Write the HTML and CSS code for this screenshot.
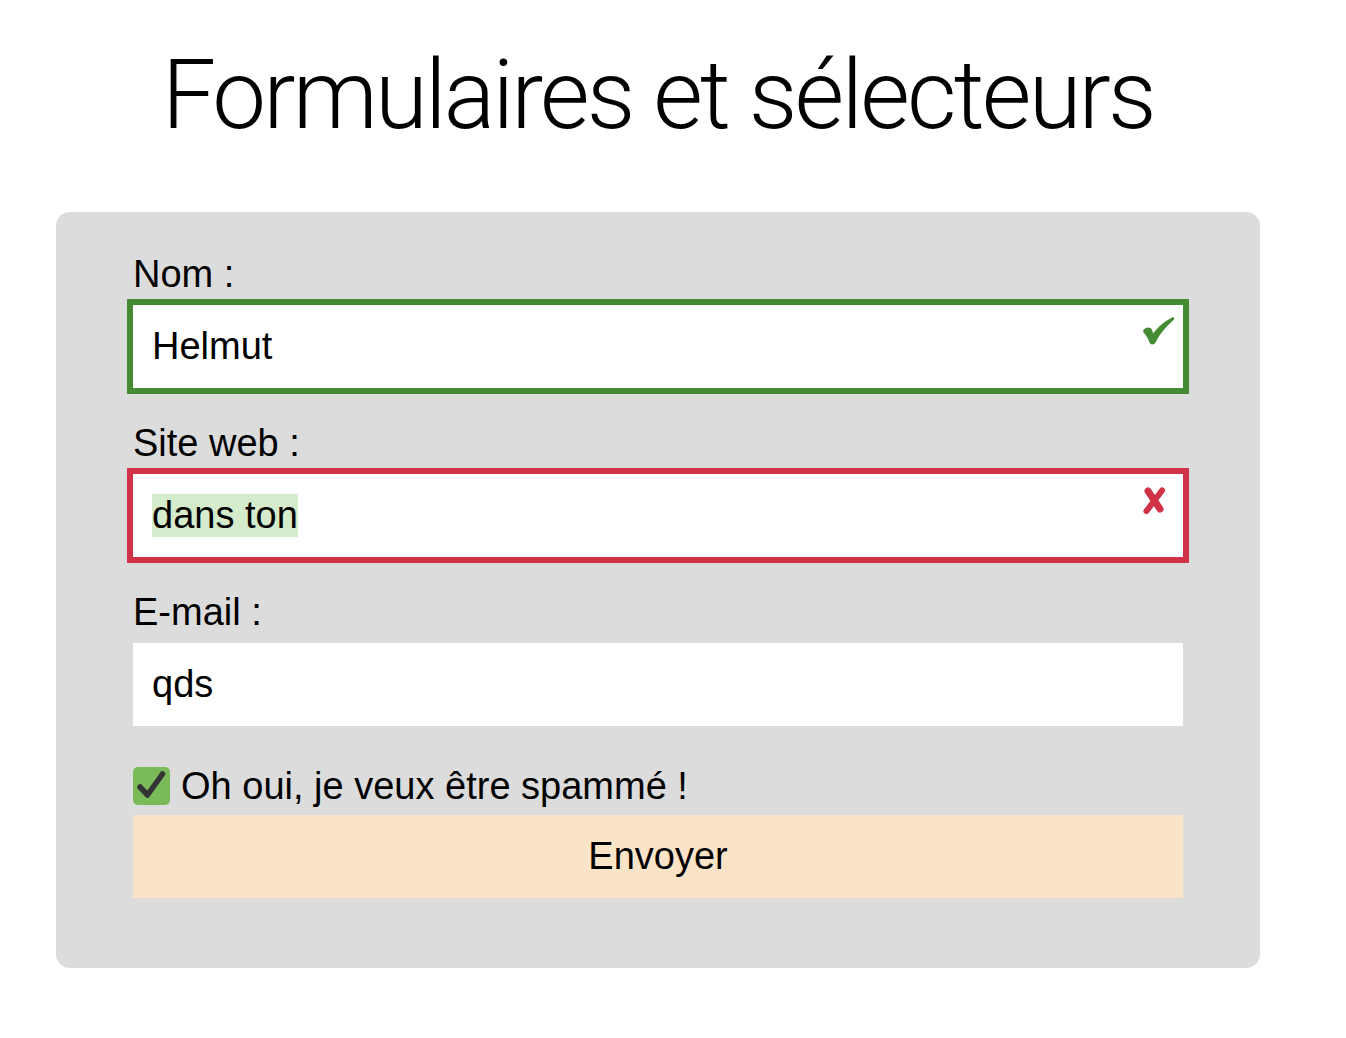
FILE: index.html
```html
<!DOCTYPE html>
<html lang="fr">
<head>
<meta charset="utf-8">
<title>Formulaires et sélecteurs</title>
<link rel="stylesheet" href="styles.css">
</head>
<body>
<div class="page">
  <h1 class="title">Formulaires et sélecteurs</h1>
  <form class="panel">
    <label class="label">Nom :</label>
    <div class="field valid">
      <span class="value">Helmut</span>
      <svg class="mark" width="36" height="30" viewBox="0 0 36 30">
        <path d="M2.5 13 C4.5 10 9.5 9.5 11 13 L12.3 16.5 C17 10 23 4.5 31.5 0.3 C33 -0.2 34 1.5 32.8 2.7 C25.5 9 19.5 16 14.5 25.5 C13 28 9.5 28 8.5 25.5 C7 21.5 5 18 2.8 15.8 C2 15 1.9 13.8 2.5 13 Z" fill="#458b33"/>
      </svg>
    </div>
    <label class="label">Site web :</label>
    <div class="field invalid">
      <span class="value hl">dans ton</span>
      <svg class="mark cross" width="30" height="30" viewBox="0 0 30 30">
        <path d="M7 4 L19 22" stroke="#d03247" stroke-width="7" stroke-linecap="round" fill="none"/>
        <path d="M21 3.5 L5.5 24" stroke="#d03247" stroke-width="6" stroke-linecap="round" fill="none"/>
      </svg>
    </div>
    <label class="label">E-mail :</label>
    <div class="field">
      <span class="value">qds</span>
    </div>
    <div class="check-row">
      <span class="box">
        <svg width="37" height="38" viewBox="0 0 37 38">
          <path d="M7 20 L14.5 28 L29.5 7" stroke="#333333" stroke-width="5.5" stroke-linecap="round" stroke-linejoin="round" fill="none"/>
        </svg>
      </span>
      <span class="check-text">Oh oui, je veux être spammé !</span>
    </div>
    <div class="button">Envoyer</div>
  </form>
</div>
</body>
</html>
```

FILE: styles.css
```css
html, body {
  margin: 0;
  padding: 0;
  background: #ffffff;
}

.page {
  width: 1204px;
  margin-left: 56px;
  padding-top: 39px;
}

.title {
  margin: 0 0 61px 0;
  font-family: Roboto, "Liberation Sans", sans-serif;
  font-weight: 300;
  font-size: 96px;
  line-height: 112px;
  letter-spacing: -2.8px;
  text-align: center;
  color: #000;
}

.panel {
  background: #dcdcdc;
  border-radius: 14px;
  padding: 40px 77px 70px 77px;
  font-family: "Liberation Sans", Arial, sans-serif;
  font-size: 38px;
  color: #000;
}

.label {
  display: block;
  line-height: 44px;
  margin-bottom: 9px;
}

.field {
  position: relative;
  height: 83px;
  background: #ffffff;
  display: flex;
  align-items: center;
  padding-left: 19px;
  margin-bottom: 33px;
}

.field.valid {
  box-shadow: 0 0 0 6px #458b33;
}

.field.invalid {
  box-shadow: 0 0 0 6px #d03247;
}

.value {
  line-height: normal;
}

.hl {
  background: #d4eccb;
}

.mark {
  position: absolute;
  right: 6px;
  top: 12px;
}

.mark.cross {
  right: 12px;
  top: 13px;
}

.check-row {
  display: flex;
  align-items: center;
  height: 44px;
  margin-top: 38px;
  margin-bottom: 7px;
}

.box {
  width: 37px;
  height: 38px;
  border-radius: 5px;
  background: #7aba58;
  margin-right: 11px;
  display: flex;
}

.check-text {
  line-height: 44px;
}

.button {
  height: 83px;
  background: #fbe3c8;
  display: flex;
  align-items: center;
  justify-content: center;
}
```
